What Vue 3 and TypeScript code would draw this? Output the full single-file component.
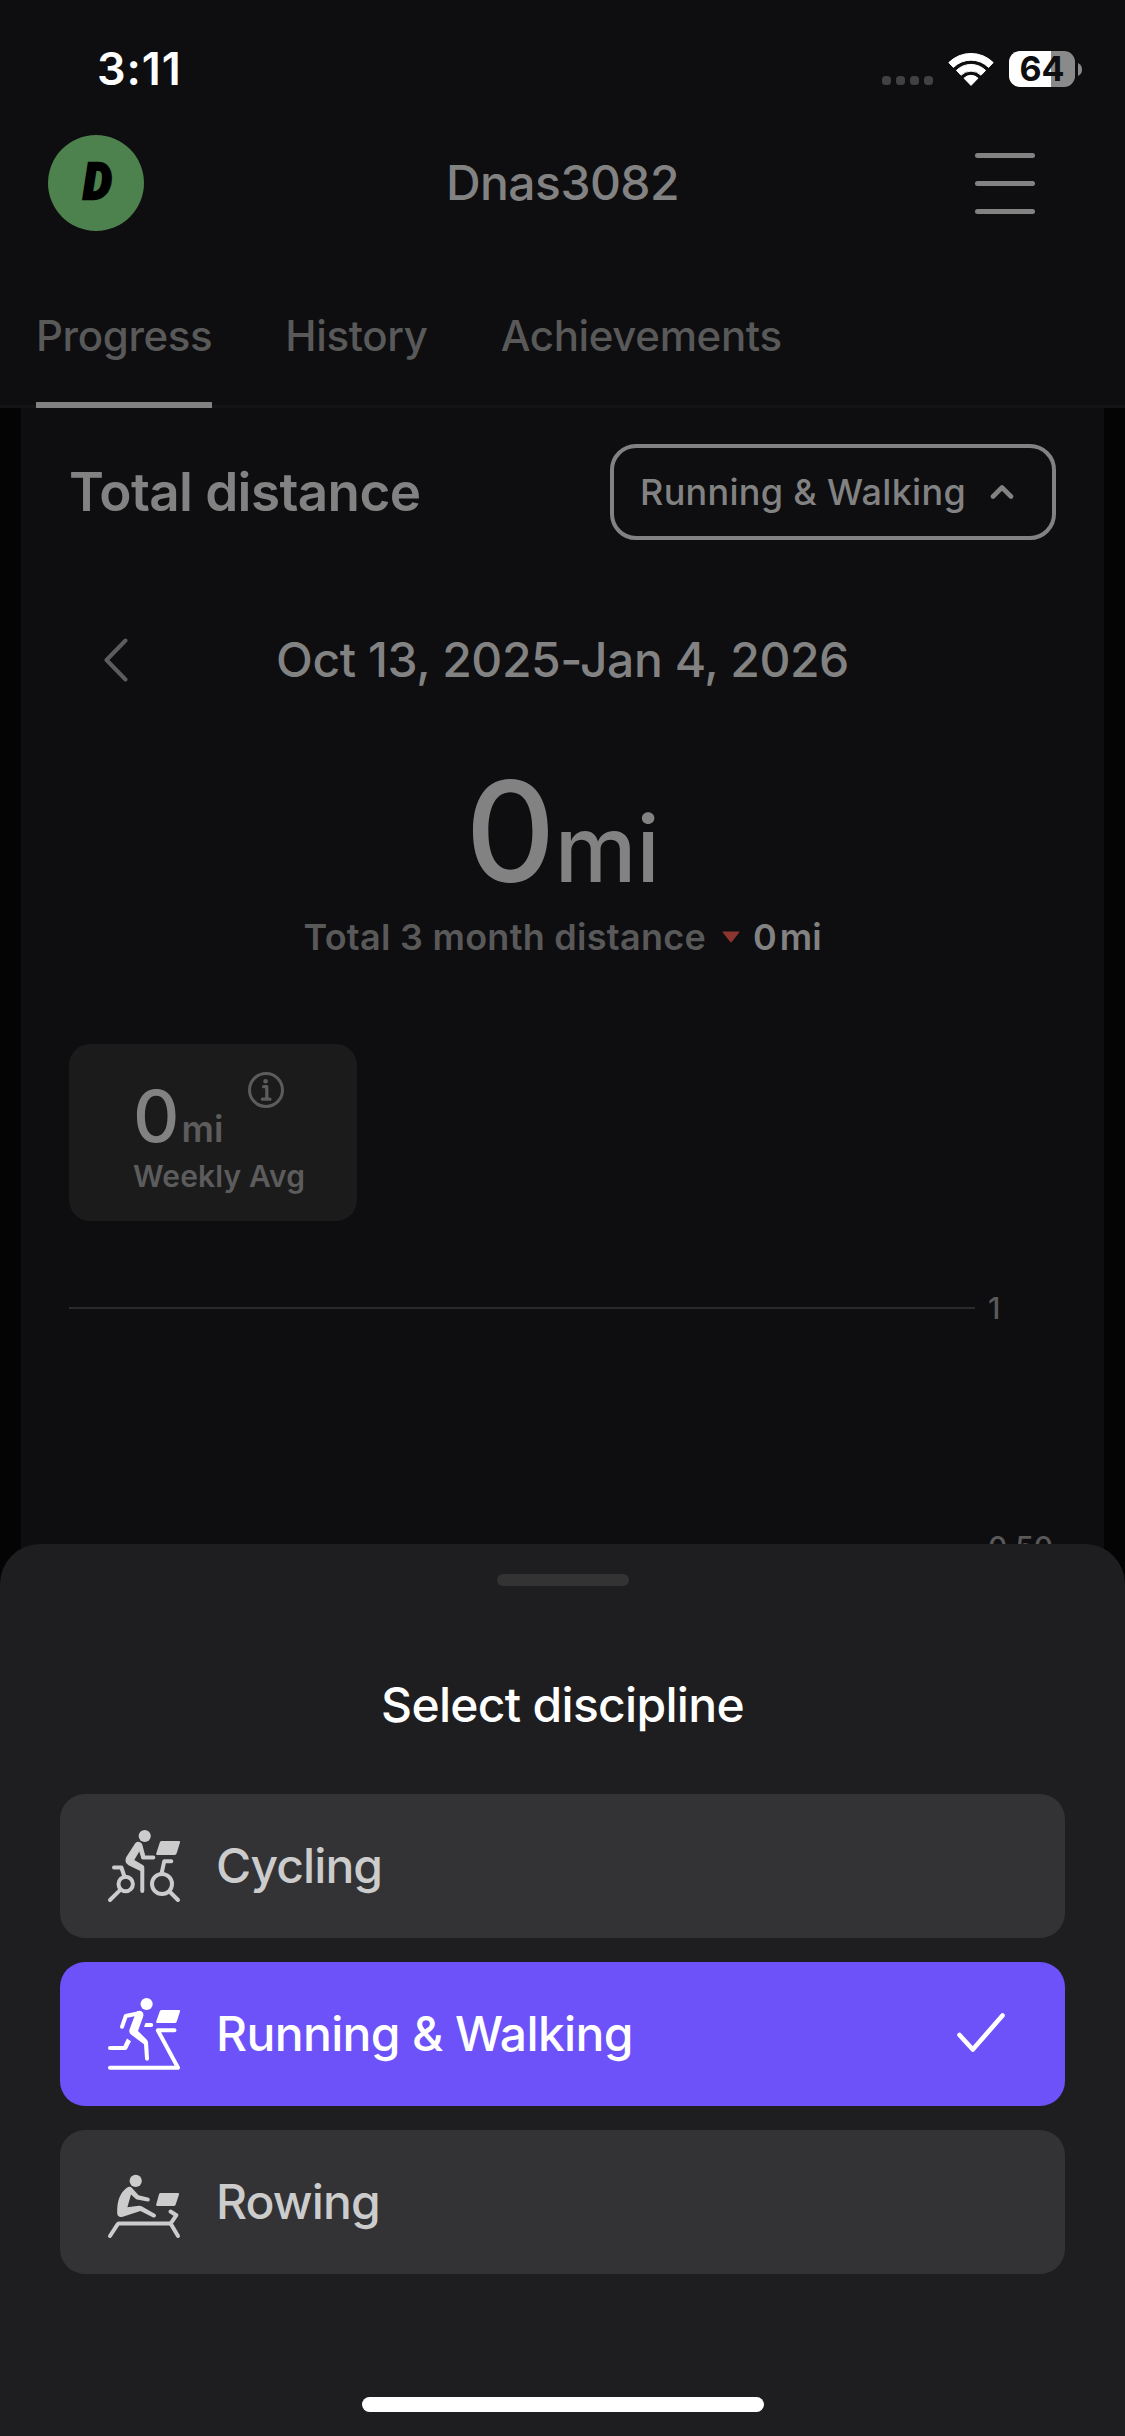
<script setup lang="ts">
import { ref } from 'vue'

interface Discipline {
  id: 'cycling' | 'running' | 'rowing'
  label: string
}

const tabs: string[] = ['Progress', 'History', 'Achievements']
const activeTab = ref('Progress')
const disciplines: Discipline[] = [
  { id: 'cycling', label: 'Cycling' },
  { id: 'running', label: 'Running & Walking' },
  { id: 'rowing', label: 'Rowing' },
]
const selected = ref<Discipline['id']>('running')
</script>

<template>
  <div class="screen">
    <div class="status">
      <span class="time">3:11</span>
      <div class="status-icons">
        <div class="dots"><i v-for="n in 4" :key="n"></i></div>
        <svg class="wifi" width="46" height="34" viewBox="0 0 46 34">
          <path d="M0.8 10.6 A31.5 31.5 0 0 1 45.2 10.6 L40.6 15.4 A25 25 0 0 0 5.4 15.4 Z" fill="#fff" stroke="#fff" stroke-width="1" stroke-linejoin="round" />
          <path d="M8.4 18.4 A20.8 20.8 0 0 1 37.6 18.4 L33 23.2 A14.3 14.3 0 0 0 13 23.2 Z" fill="#fff" stroke="#fff" stroke-width="1" stroke-linejoin="round" />
          <path d="M16 26.2 A10 10 0 0 1 30 26.2 L23 33.4 Z" fill="#fff" stroke="#fff" stroke-width="1" stroke-linejoin="round" />
        </svg>
        <div class="battery"><span>64</span></div>
        <svg class="nub" width="4" height="13" viewBox="0 0 4 13"><path d="M0 0 Q4 2 4 6.5 Q4 11 0 13 Z" fill="#8a8a8b" /></svg>
      </div>
    </div>

    <header class="header">
      <div class="avatar"><span>D</span></div>
      <h1>Dnas3082</h1>
      <button class="menu" aria-label="Menu"><i></i><i></i><i></i></button>
    </header>

    <nav class="tabs">
      <button v-for="tab in tabs" :key="tab" :class="['tab', { active: tab === activeTab }]" @click="activeTab = tab">{{ tab }}</button>
    </nav>

    <main class="panel">
      <div class="panel-head">
        <h2>Total distance</h2>
        <button class="select">
          <span>Running &amp; Walking</span>
          <svg width="24" height="16" viewBox="0 0 24 16"><path d="M3 12.5 L12 3.5 L21 12.5" fill="none" stroke="#828283" stroke-width="4.6" stroke-linecap="round" stroke-linejoin="round" /></svg>
        </button>
      </div>

      <div class="range">
        <svg class="prev" width="24" height="44" viewBox="0 0 24 44"><path d="M21.5 2.5 L2.5 22 L21.5 41.5" fill="none" stroke="#5c5c5d" stroke-width="4" stroke-linecap="round" stroke-linejoin="round" /></svg>
        <span>Oct 13, 2025-Jan 4, 2026</span>
      </div>

      <div class="total"><span>0</span><span class="unit">mi</span></div>
      <div class="compare">
        <span class="compare-label">Total 3 month distance</span>
        <svg width="18" height="12" viewBox="0 0 18 12"><path d="M1.2 0.5 H16.8 Q18 0.5 17.2 1.6 L10 10.8 Q9 12 8 10.8 L0.8 1.6 Q0 0.5 1.2 0.5 Z" fill="#8a3530" /></svg>
        <span class="compare-value">0</span><span class="compare-unit">mi</span>
      </div>

      <div class="card">
        <div class="card-value"><span class="n">0</span><span class="u">mi</span>
          <svg class="info" width="36" height="36" viewBox="0 0 36 36" fill="none" stroke="#5c5c5d" stroke-linecap="round" stroke-linejoin="round">
            <circle cx="18" cy="18" r="16.5" stroke-width="3" />
            <path d="M15.6 14.7 H18.8 V27 M14.4 27.2 H22" stroke-width="3.2" />
            <circle cx="17.6" cy="9.3" r="2.3" fill="#5c5c5d" stroke="none" />
          </svg>
        </div>
        <div class="card-label"><span>Weekly Avg</span></div>
      </div>

      <div class="chart">
        <div class="grid-row"><i></i><span>1</span></div>
        <div class="grid-row"><i></i><span>0.50</span></div>
      </div>
    </main>

    <section class="sheet">
      <div class="handle"></div>
      <h3>Select discipline</h3>
      <div class="options">
        <button v-for="d in disciplines" :key="d.id" :class="['option', { on: d.id === selected }]" @click="selected = d.id">
          <svg v-if="d.id === 'cycling'" class="icon" viewBox="0 0 72 72">
            <circle cx="36.7" cy="6" r="6.1" class="f" />
            <path class="f" d="M53.8 11 H71 Q72.4 11 72 12.4 L68.6 23.6 Q68.1 25 66.6 25 H49.2 Q47.7 25 48.2 23.6 L51.8 12.4 Q52.3 11 53.8 11 Z" />
            <path class="f" d="M27.2 13.2 Q29 11.4 31.4 12 Q34 12.6 34.4 15 L37.2 25.5 L33.4 28.5 L31.3 21.5 L26.3 30 L35.2 35.2 Q36.3 36 36.3 37.8 V61 Q36.3 63 34.3 63 Q32.3 63 32.3 61 V41 L20.5 35.2 Q15.8 32 18.3 27 Z" />
            <path d="M35 27.5 H45.3" /><path d="M6 37.5 H13.4 L16.6 47" />
            <circle cx="17.7" cy="54" r="7.2" /><path d="M12.3 59.8 L2 70" />
            <path d="M63.3 31.3 H56.2 L53.6 43.5" /><circle cx="54" cy="54" r="10" /><path d="M61.5 61.5 L70 70" />
          </svg>
          <svg v-else-if="d.id === 'running'" class="icon" viewBox="0 0 72 72">
            <circle cx="38.6" cy="6" r="6.1" class="f" />
            <path class="f" d="M53.8 12 H71 Q72.4 12 72 13.4 L68.6 23.9 Q68.1 25 66.6 25 H49.2 Q47.7 25 48.2 23.6 L51.8 13.2 Q52.3 12 53.8 12 Z" />
            <path d="M31 15.2 L17.8 18 L14 28.8" />
            <path class="f" d="M29 13.2 Q33 11.8 34.8 14.4 Q36 16.5 35 19 L30 33 L38.6 41.6 Q40 43 40.1 45 L41 60.5 Q41 62.8 39.2 62.8 Q37.2 62.8 37 60.8 L36 46.3 L23 36.5 Q20.4 34.3 21.6 31.2 L26.6 18 Z" />
            <path class="f" d="M37.5 25 H43.2 Q45.2 25 45.2 27 Q45.2 29 43.2 29 H36 Z" />
            <path class="f" d="M19 40.4 L23 43.2 L19.2 50.8 Q18.5 52 17 52 H2 Q0 52 0 50 Q0 48 2 48 H15.4 Z" />
            <path d="M66.5 32.3 H49.8 L70 69.8 H2" />
          </svg>
          <svg v-else class="icon" viewBox="0 0 72 72">
            <circle cx="27.7" cy="14.9" r="6.1" class="f" />
            <path class="f" d="M52.8 27 H70 Q71.4 27 71 28.4 L67.6 38.8 Q67.1 40 65.6 40 H49.2 Q47.7 40 48.2 38.6 L51 28.2 Q51.4 27 52.8 27 Z" />
            <path class="f" d="M19.6 21.2 Q22.4 20.2 24.2 22.2 L30.6 29.3 L40.6 31.8 Q42 32.5 41.8 34 Q41.4 35.7 39.6 35.5 L29 33.6 Q28.2 33.4 27.6 32.8 L23 28.6 L19.4 41.3 L31 39.7 Q32.4 39.5 33.6 40.2 L47.2 48 Q48.6 49 47.8 50.6 Q46.8 52 45.2 51.4 L32.4 45 L14 51 Q9.6 51.6 9.2 47.6 Q8.4 28.6 19.6 21.2 Z" />
            <path d="M2 70 L9.4 58.6 Q10 57.6 11 57.6 H62.6 L70 70" /><path d="M62.6 57.6 L68.4 49.2 L62.5 45.5" />
          </svg>
          <span>{{ d.label }}</span>
          <svg v-if="d.id === selected" class="check" width="48" height="40" viewBox="0 0 48 40"><path d="M2.5 22 L15.8 36.5 L45.5 2.5" fill="none" stroke="#fff" stroke-width="4.6" stroke-linecap="round" stroke-linejoin="round" /></svg>
        </button>
      </div>
      <div class="home"></div>
    </section>
  </div>
</template>

<style>
body { background: #0e0e10; }
</style>

<style scoped>
* { box-sizing: border-box; margin: 0; padding: 0; }
.screen { position: relative; width: 1125px; height: 2436px; overflow: hidden; background: #0e0e10; color: #828283; font-family: Inter, "Liberation Sans", sans-serif; font-weight: 500; }
button { background: none; border: 0; font: inherit; color: inherit; }
i { display: block; }
svg { display: block; flex: none; }
.status { height: 135px; padding: 0 43px 0 97px; display: flex; align-items: flex-start; justify-content: space-between; }
.time { margin-top: 44px; font-size: 45px; line-height: 50px; font-weight: 600; color: #fff; letter-spacing: 0.9px; }
.status-icons { display: flex; margin-top: 51px; }
.dots { display: flex; gap: 5px; margin-top: 25px; }
.dots i { width: 9px; height: 9px; border-radius: 3.5px; background: #414143; }
.wifi { margin: 1px 15px 0; }
.battery { width: 66px; height: 36px; border-radius: 11px; background: linear-gradient(90deg, #fff 42px, #8a8a8b 42px); color: #0e0e10; font-size: 34px; line-height: 36px; font-weight: 700; text-align: center; }
.nub { margin: 12px 0 0 3px; }
.header { height: 96px; padding: 0 90px 0 48px; display: grid; grid-template-columns: 1fr auto 1fr; align-items: center; }
.avatar { width: 96px; height: 96px; border-radius: 50%; background: #4d814d; display: flex; align-items: center; justify-content: center; }
.avatar span { color: #000; font-family: Roboto, Inter, sans-serif; font-size: 49px; line-height: 96px; font-weight: 900; font-style: italic; transform: translateX(1px) scaleX(0.92); -webkit-text-stroke: 2.5px #000; }
h1 { font-size: 48px; line-height: 60px; font-weight: 500; letter-spacing: -0.55px; transform: translateX(21px); }
.menu { width: 60px; display: flex; flex-direction: column; gap: 23px; justify-self: end; }
.menu i { height: 5px; border-radius: 3px; background: #828283; }
.tabs { height: 177px; padding: 33px 36px 0; display: flex; gap: 73px; border-bottom: 3px solid #141415; }
.tab { height: 144px; font-size: 42px; line-height: 144px; color: #59595a; letter-spacing: -0.35px; }
.tab.active { border-bottom: 6px solid #828283; }
.panel { margin: 0 21px; height: 1200px; background: #0e0e10; padding: 36px 48px 0; box-shadow: -21px 0 0 #040404, 21px 0 0 #040404; }
.panel-head { display: flex; align-items: center; justify-content: space-between; height: 96px; }
h2 { font-size: 53px; line-height: 96px; font-weight: 600; letter-spacing: -0.6px; }
.select { height: 96px; width: 446px; border: 4px solid #828283; border-radius: 26px; padding: 0 38px 0 26px; display: flex; align-items: center; justify-content: space-between; font-size: 36px; letter-spacing: 0.3px; }
.range { position: relative; margin-top: 84px; height: 72px; line-height: 72px; font-size: 48px; text-align: center; letter-spacing: -0.42px; }
.prev { position: absolute; left: 35px; top: 14px; }
.total { display: flex; justify-content: center; align-items: baseline; height: 150px; margin-top: 60px; line-height: 150px; font-size: 140px; }
.unit { font-size: 92px; margin-left: -1px; }
.compare { margin-top: 6px; height: 50px; display: flex; justify-content: center; align-items: center; font-size: 36px; line-height: 50px; font-weight: 600; }
.compare-label { color: #59595a; margin-right: 16px; letter-spacing: 0.27px; }
.compare-value { margin-left: 13px; }
.compare-unit { margin-left: 3px; }
.card { margin-top: 82px; width: 288px; height: 177px; border-radius: 21px; background: #1b1b1b; padding: 28px 0 0 64px; color: #5c5c5d; }
.card-value { display: flex; align-items: baseline; height: 88px; line-height: 88px; }
.n { font-size: 72px; color: #828283; }
.u { font-size: 36px; margin-left: 2px; font-weight: 600; }
.info { align-self: flex-start; margin-left: 25px; }
.card-label { font-size: 30px; line-height: 32px; height: 32px; font-weight: 600; letter-spacing: 0.15px; }
.chart { margin-top: 67px; }
.grid-row { display: flex; align-items: center; height: 40px; margin-bottom: 199px; font-size: 30px; font-weight: 500; color: #59595a; }
.grid-row i { width: 906px; height: 2px; background: #2a2a2b; margin-right: 13px; }
.sheet { position: absolute; left: 0; right: 0; top: 1544px; height: 892px; border-radius: 40px 40px 0 0; background: #1e1e20; padding: 30px 60px 0; display: flex; flex-direction: column; align-items: center; }
.handle { width: 132px; height: 12px; border-radius: 6px; background: #333334; }
h3 { margin-top: 89px; font-size: 48px; line-height: 60px; font-weight: 500; letter-spacing: -0.7px; color: #fff; }
.options { margin-top: 59px; width: 100%; display: flex; flex-direction: column; gap: 24px; }
.option { height: 144px; border-radius: 25px; background: #333335; color: #cccccd; display: flex; align-items: center; padding: 0 60px 0 48px; font-size: 48px; line-height: 60px; letter-spacing: -0.9px; }
.option.on { background: #6d52fa; color: #fff; letter-spacing: -0.65px; }
.icon { width: 72px; height: 72px; margin-right: 36px; overflow: visible; fill: none; stroke: currentColor; stroke-width: 4; stroke-linecap: round; stroke-linejoin: round; }
.icon .f { fill: currentColor; stroke: none; }
.check { margin-left: auto; margin-top: -3px; }
.home { margin-top: auto; margin-bottom: 24px; width: 402px; height: 15px; border-radius: 8px; background: #fff; }
</style>
